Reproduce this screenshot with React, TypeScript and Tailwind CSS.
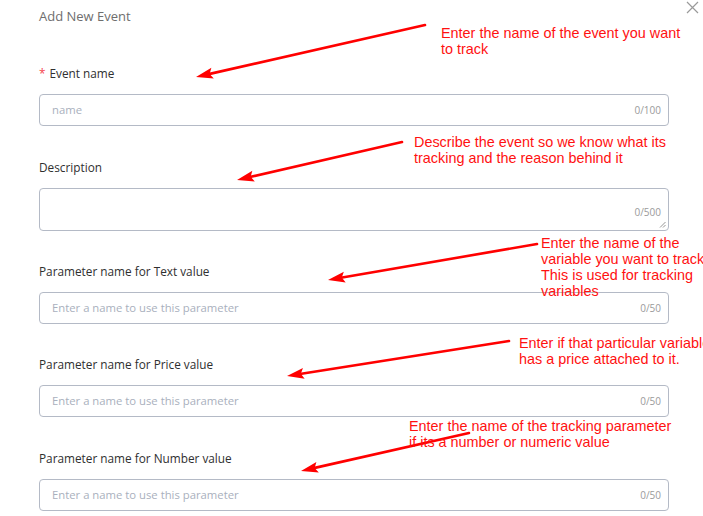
import React from 'react';

type Field = {
  label: string;
  placeholder: string;
  max: number;
  required?: boolean;
  multiline?: boolean;
  gap: string;
};

const fields: Field[] = [
  { label: 'Event name', placeholder: 'name', max: 100, required: true, gap: 'mt-[40px]' },
  { label: 'Description', placeholder: '', max: 500, multiline: true, gap: 'mt-[33px]' },
  { label: 'Parameter name for Text value', placeholder: 'Enter a name to use this parameter', max: 50, gap: 'mt-[32px]' },
  { label: 'Parameter name for Price value', placeholder: 'Enter a name to use this parameter', max: 50, gap: 'mt-[32px]' },
  { label: 'Parameter name for Number value', placeholder: 'Enter a name to use this parameter', max: 50, gap: 'mt-[33px]' },
];

const notes = [
  { pos: 'left-[441px] top-[25px]', lines: ['Enter the name of the event you want', 'to track'] },
  { pos: 'left-[414px] top-[134px]', lines: ['Describe the event so we know what its', 'tracking and the reason behind it'] },
  {
    pos: 'left-[541px] top-[235px]',
    lines: ['Enter the name of the', 'variable you want to track', 'This is used for tracking', 'variables'],
  },
  { pos: 'left-[519px] top-[335px]', lines: ['Enter if that particular variable', 'has a price attached to it.'] },
  { pos: 'left-[409px] top-[418px]', lines: ['Enter the name of the tracking parameter', 'if its a number or numeric value'] },
];

// [fromX, fromY, tipX, tipY]
const arrows = [
  [425, 25, 196, 77],
  [402, 142, 237, 180],
  [537, 244, 328, 280],
  [509, 341, 287, 376],
  [469, 433, 301, 471],
];

function Arrow({ a }: { a: number[] }) {
  const [x1, y1, x2, y2] = a;
  const dx = x2 - x1;
  const dy = y2 - y1;
  const len = Math.hypot(dx, dy);
  const ux = dx / len;
  const uy = dy / len;
  const head = 17;
  const half = 5.5;
  const bx = x2 - ux * head;
  const by = y2 - uy * head;
  const pts = `${x2},${y2} ${bx - uy * half},${by + ux * half} ${bx + ux * 3},${by + uy * 3} ${bx + uy * half},${by - ux * half}`;
  return (
    <g>
      <line x1={x1} y1={y1} x2={bx + ux * 4} y2={by + uy * 4} stroke="#ff0000" strokeWidth={2.6} strokeLinecap="round" />
      <polygon points={pts} fill="#ff0000" />
    </g>
  );
}

function Input({ f }: { f: Field }) {
  if (f.multiline) {
    return (
      <div className="relative h-[43px] rounded-[4px] border border-[#b4bac6] bg-white">
        <span className="absolute right-[7px] top-[16px] text-[10px] leading-[14px] text-[#9a9a9a]">0/{f.max}</span>
        <svg className="absolute bottom-[2px] right-[2px]" width="7" height="7" viewBox="0 0 7 7">
          <path d="M1 6.5 L6.5 1 M4 6.5 L6.5 4" stroke="#8a8a8a" strokeWidth="0.9" />
        </svg>
      </div>
    );
  }
  return (
    <div className="flex h-[32px] items-center rounded-[4px] border border-[#b4bac6] bg-white pl-[12px] pr-[7px]">
      <span className="flex-1 text-[11.3px] text-[#a9b0bd]">{f.placeholder}</span>
      <span className="text-[10px] text-[#9a9a9a]">0/{f.max}</span>
    </div>
  );
}

export default function App() {
  return (
    <div className="relative h-[516px] w-[703px] overflow-hidden bg-white font-['Open_Sans',sans-serif]">
      <div className="pl-[39px] pr-[34px] pt-[8px]">
        <div className="text-[13px] leading-[17px] text-[#6e6e6e]">Add New Event</div>
        {fields.map((f) => (
          <div key={f.label} className={f.gap}>
            <div className="mb-[13px] text-[11.8px] font-medium leading-[16px] text-[#2f2f2f]">
              {f.required && <span className="mr-[4px] text-[#f5434d]">*</span>}
              {f.label}
            </div>
            <Input f={f} />
          </div>
        ))}
      </div>

      <button className="absolute left-[686px] top-[1px] h-[13px] w-[13px]" aria-label="close">
        <svg width="13" height="13" viewBox="0 0 13 13">
          <path d="M1 1 L12 12 M12 1 L1 12" stroke="#9a9a9a" strokeWidth="1.2" />
        </svg>
      </button>

      <svg className="pointer-events-none absolute left-0 top-0" width="703" height="516">
        {arrows.map((a, i) => (
          <Arrow key={i} a={a} />
        ))}
      </svg>

      {notes.map((n) => (
        <div
          key={n.lines[0]}
          className={`absolute ${n.pos} whitespace-nowrap font-['Liberation_Sans',Arial,sans-serif] text-[14.4px] leading-[16px] text-[#ff1111]`}
        >
          {n.lines.map((l) => (
            <div key={l}>{l}</div>
          ))}
        </div>
      ))}
    </div>
  );
}
